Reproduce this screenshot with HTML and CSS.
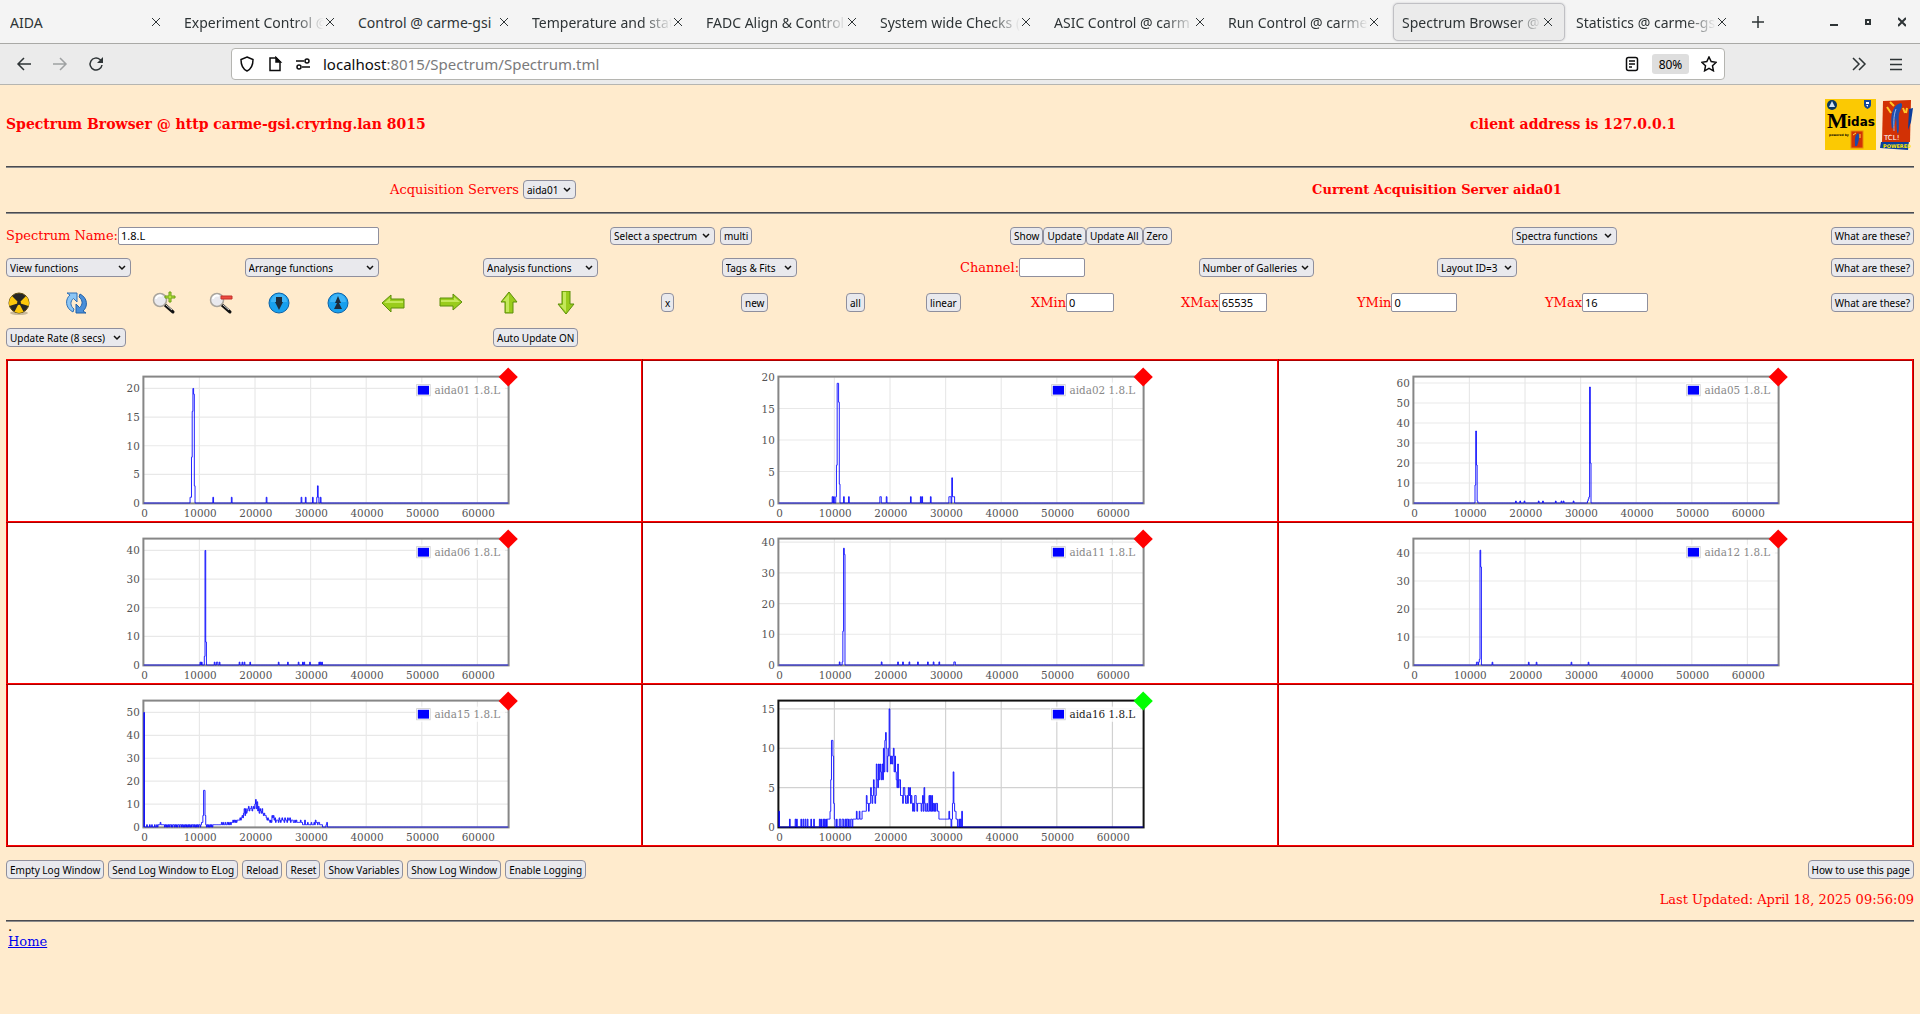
FILE: index.html
```html
<!DOCTYPE html>
<html lang="en">
<head>
    <meta charset="UTF-8">
    <meta name="viewport" content="width=device-width, initial-scale=1.0">
    <title>Spectrum Browser @ carme-gsi</title>
    <link rel="stylesheet" href="styles.css">
</head>
<body>
    <header class="browser">
        <div class="tab-bar">
            <div class="tab"><span class="tab-title">AIDA</span><button class="tab-close" aria-label="Close tab"><svg viewBox="0 0 10 10"><path d="M1 1l8 8M9 1l-8 8"/></svg></button></div>
            <div class="tab"><span class="tab-title fade">Experiment Control @</span><button class="tab-close" aria-label="Close tab"><svg viewBox="0 0 10 10"><path d="M1 1l8 8M9 1l-8 8"/></svg></button></div>
            <div class="tab"><span class="tab-title">Control @ carme-gsi</span><button class="tab-close" aria-label="Close tab"><svg viewBox="0 0 10 10"><path d="M1 1l8 8M9 1l-8 8"/></svg></button></div>
            <div class="tab"><span class="tab-title fade">Temperature and stat</span><button class="tab-close" aria-label="Close tab"><svg viewBox="0 0 10 10"><path d="M1 1l8 8M9 1l-8 8"/></svg></button></div>
            <div class="tab"><span class="tab-title fade">FADC Align &amp; Control</span><button class="tab-close" aria-label="Close tab"><svg viewBox="0 0 10 10"><path d="M1 1l8 8M9 1l-8 8"/></svg></button></div>
            <div class="tab"><span class="tab-title fade">System wide Checks (</span><button class="tab-close" aria-label="Close tab"><svg viewBox="0 0 10 10"><path d="M1 1l8 8M9 1l-8 8"/></svg></button></div>
            <div class="tab"><span class="tab-title fade">ASIC Control @ carm</span><button class="tab-close" aria-label="Close tab"><svg viewBox="0 0 10 10"><path d="M1 1l8 8M9 1l-8 8"/></svg></button></div>
            <div class="tab"><span class="tab-title fade">Run Control @ carme</span><button class="tab-close" aria-label="Close tab"><svg viewBox="0 0 10 10"><path d="M1 1l8 8M9 1l-8 8"/></svg></button></div>
            <div class="tab active"><span class="tab-title fade">Spectrum Browser @</span><button class="tab-close" aria-label="Close tab"><svg viewBox="0 0 10 10"><path d="M1 1l8 8M9 1l-8 8"/></svg></button></div>
            <div class="tab"><span class="tab-title fade">Statistics @ carme-gs</span><button class="tab-close" aria-label="Close tab"><svg viewBox="0 0 10 10"><path d="M1 1l8 8M9 1l-8 8"/></svg></button></div>
            <button class="new-tab" aria-label="New tab"><svg width="12" height="12" viewBox="0 0 12 12"><path d="M6 0v12M0 6h12" stroke-width="1.500"/></svg></button>
            <div class="window-buttons">
                <button aria-label="Minimize"><svg width="8" height="10" viewBox="0 0 8 10"><path d="M0 8h8" stroke-width="2"/></svg></button>
                <button aria-label="Maximize"><svg width="8" height="10" viewBox="0 0 8 10"><path d="M2 3h4v4H2z" stroke-width="2"/></svg></button>
                <button aria-label="Close window"><svg width="8" height="10" viewBox="0 0 8 10"><path d="M0 1l8 8M8 1l-8 8" stroke-width="2"/></svg></button>
            </div>
        </div>
        <div class="nav-bar">
            <div class="nav-buttons">
                <button aria-label="Back"><svg width="16" height="16" viewBox="0 0 16 16"><path d="M15 8H2M8 2L2 8l6 6"/></svg></button>
                <button aria-label="Forward" class="disabled"><svg width="16" height="16" viewBox="0 0 16 16"><path d="M1 8h13M8 2l6 6-6 6"/></svg></button>
                <button aria-label="Reload"><svg width="16" height="16" viewBox="0 0 16 16"><path d="M14 9A6 6 0 1 1 12 3.500L14 5.500"/><path d="M15 1v6H9z" fill="#2e3436" stroke="none"/></svg></button>
            </div>
            <div class="url-bar">
                <svg width="16" height="16" viewBox="0 0 16 16"><path d="M8 1L14 3.500C14 9 12.500 13 8 15C3.500 13 2 9 2 3.500z"/></svg>
                <svg width="16" height="16" viewBox="0 0 16 16"><path d="M3 2h6l4 4v8.500H3z"/><path d="M9 1.500V6h4.500z" fill="#0c0c0d"/></svg>
                <svg width="16" height="16" viewBox="0 0 16 16"><path d="M1 5h8M7 11h8"/><circle cx="12" cy="5" r="2"/><circle cx="4" cy="11" r="2"/></svg>
                <span class="url"><b>localhost</b>:8015/Spectrum/Spectrum.tml</span>
                <svg width="16" height="16" viewBox="0 0 16 16"><rect x="2.500" y="1.500" width="11" height="13" rx="2"/><path d="M5 5h6M5 8h6M5 11h3"/></svg>
                <button class="zoom-level">80%</button>
                <svg width="16" height="16" viewBox="0 0 16 16"><path d="M8 1l2.200 4.600 5 .7-3.700 3.500.9 5L8 12.400l-4.400 2.400.9-5L.8 6.300l5-.7z"/></svg>
            </div>
            <div class="nav-menu">
                <button aria-label="More tools"><svg width="16" height="16" viewBox="0 0 16 16"><path d="M2 2l6 6-6 6M8 2l6 6-6 6"/></svg></button>
                <button aria-label="Menu"><svg width="16" height="16" viewBox="0 0 16 16"><path d="M2 3.500h12M2 8.500h12M2 13.500h12"/></svg></button>
            </div>
        </div>
    </header>

    <main class="page">
        <div class="title-row">
            <h3>Spectrum Browser @ http carme-gsi.cryring.lan 8015</h3>
            <h3>client address is 127.0.0.1</h3>
            <div class="logos">
                <svg width="51" height="51" viewBox="0 0 51 51" role="img" aria-label="Midas">
                    <rect width="51" height="51" fill="#fbc903"/>
                    <circle cx="7" cy="6" r="5" fill="#073763"/>
                    <path d="M4 8h6L7 2z" fill="#cfe2f3"/>
                    <path d="M39 1h7v5c0 2-2 3-3.500 4C41 9 39 8 39 6z" fill="#10479a"/>
                    <path d="M41 3h3v2h-3zM41 6h2v2z" fill="#fff"/>
                    <text x="2" y="29" class="logo-m">M</text>
                    <text x="22" y="27" class="logo-idas">idas</text>
                    <text x="4" y="37" class="logo-small">powered by</text>
                    <rect x="26" y="32" width="12" height="17" fill="#d23105" stroke="#e88a0a"/>
                    <path d="M30 47c0-6-1-10 3-13 2 2 1 8-1 13z" fill="#1c49a8"/>
                    <path d="M28 36l3-2M35 35v4" stroke="#ffd93b" fill="none"/>
                </svg>
                <svg width="33" height="51" viewBox="0 0 33 51" role="img" aria-label="Tcl powered">
                    <path d="M1 43l28-1-1 9-28-2z" fill="#0b3d9c"/>
                    <path d="M3 2l28-1-1 42H2z" fill="#d23105"/>
                    <path d="M29 10l4-1-2 14-3 8z" fill="#0b3d9c"/>
                    <path d="M12 30c-2-12 0-24 9-26 3 2-1 7-2 11s1 14-1 20c-2-3-1-12-2-16-1 4-1 8-4 11z" fill="#1f4fae"/>
                    <path d="M16 10c-3 8-2 15-2 22" fill="none" stroke="#9ab6ea"/>
                    <path d="M7 8l4 6M10 3l4 4M23 9l2 5M27 9l-1 5" stroke="#ffc629" stroke-width="2" fill="none"/>
                    <text x="4" y="41" class="logo-tcl">TCL!</text>
                    <text x="3" y="49" class="logo-powered">POWERED</text>
                </svg>
            </div>
        </div>
        <hr>
        <div class="server-row">
            <div>
                <label for="server">Acquisition Servers</label>
                <select id="server" class="w-server"><option>aida01</option></select>
            </div>
            <b>Current Acquisition Server aida01</b>
        </div>
        <hr>

        <div class="controls name-row">
            <div class="field">
                <label for="spectrum-name">Spectrum Name:</label><input id="spectrum-name" class="w-name" type="text" value="1.8.L">
            </div>
            <div class="spaced">
                <select class="w-spectrum" aria-label="Spectrum"><option>Select a spectrum</option></select>
                <button>multi</button>
            </div>
            <div class="field">
                <button>Show</button><button>Update</button><button>Update All</button><button>Zero</button>
            </div>
            <div><select class="w-spectrum" aria-label="Spectra functions"><option>Spectra functions</option></select></div>
            <div class="help"><button>What are these?</button></div>
        </div>

        <div class="controls function-row">
            <div><select class="w-view" aria-label="View"><option>View functions</option></select></div>
            <div><select class="w-arrange" aria-label="Arrange"><option>Arrange functions</option></select></div>
            <div><select class="w-analysis" aria-label="Analysis"><option>Analysis functions</option></select></div>
            <div><select class="w-tags" aria-label="Tags"><option>Tags &amp; Fits</option></select></div>
            <div class="field"><label for="channel">Channel:</label><input id="channel" class="w-limit" type="text"></div>
            <div><select class="w-analysis" aria-label="Galleries"><option>Number of Galleries</option></select></div>
            <div><select class="w-layout" aria-label="Layout"><option>Layout ID=3</option></select></div>
            <div class="help"><button>What are these?</button></div>
        </div>

        <div class="controls icon-row">
            <button class="icon" aria-label="Zero spectrum"><svg viewBox="0 0 24 24"><ellipse cx="13" cy="22" rx="9" ry="2" fill="#c9b899"/><circle cx="13" cy="12" r="10" fill="#262626" stroke="#5b4a10"/><path d="M13 12L3.500 9A10 10 0 0 0 6 19zM13 12l9.500-3A10 10 0 0 1 20 19zM13 12L8.500 3.200a10 10 0 0 1 9 0z" fill="#fdc70c" transform="rotate(180 13 12)"/><circle cx="13" cy="12" r="2" fill="#262626"/></svg></button>
            <button class="icon" aria-label="Refresh"><svg viewBox="0 0 24 24"><path d="M9 21C1 17 1 8 6 4L3 2h10v9L9.500 7.500C6 10 6 15 10 18z" fill="#8cc6f5" stroke="#2f6fb5"/><path d="M16 3c8 4 8 13 3 17l3 2H12v-9l3.500 3.500C19 14 19 9 15 6z" fill="#4a8fd9" stroke="#2160a8"/></svg></button>
            <button class="icon" aria-label="Zoom in"><svg viewBox="0 0 24 24"><path d="M13 14l8 7" stroke="#111" stroke-width="3" stroke-linecap="round"/><path d="M14 14l6 5" stroke="#ddd"/><circle cx="8" cy="9" r="6.500" fill="#e9e9ee" stroke="#a9a49c" stroke-width="1.500"/><path d="M4 8a4 4 0 0 1 6-3" stroke="#fff" fill="none" stroke-width="2"/><path d="M17 1h2v4h4v2h-4v4h-2V7h-4V5h4z" fill="#b5e63c" stroke="#6b9c12"/></svg></button>
            <button class="icon" aria-label="Zoom out"><svg viewBox="0 0 24 24"><path d="M13 14l8 7" stroke="#111" stroke-width="3" stroke-linecap="round"/><path d="M14 14l6 5" stroke="#ddd"/><circle cx="8" cy="9" r="6.500" fill="#e9e9ee" stroke="#a9a49c" stroke-width="1.500"/><path d="M4 8a4 4 0 0 1 6-3" stroke="#fff" fill="none" stroke-width="2"/><path d="M12 5h11v3H12z" fill="#ee4b40" stroke="#c4302a"/></svg></button>
            <button class="icon" aria-label="Scale down"><svg viewBox="0 0 24 24"><circle cx="13" cy="12" r="10" fill="#18a0ee" stroke="#0c62a8"/><path d="M5 11a8 8 0 0 1 16 0z" fill="#3fb4f6"/><path d="M10 6h6v5h1l-4 8-4-8h1z" fill="#1c2c3c"/></svg></button>
            <button class="icon" aria-label="Scale up"><svg viewBox="0 0 24 24"><circle cx="13" cy="12" r="10" fill="#18a0ee" stroke="#0c62a8"/><path d="M5 11a8 8 0 0 1 16 0z" fill="#3fb4f6"/><path d="M9 18h8l-3-6h2l-3-7-3 7h2z" fill="#1c2c3c"/></svg></button>
            <button class="icon" aria-label="Left"><svg viewBox="0 0 24 24"><path d="M1 12l9-8v4h13v9H10v4z" fill="#9acc1c" stroke="#5d8f0b"/><path d="M3 12l6-5v3h13v2z" fill="#c4e85a"/></svg></button>
            <button class="icon" aria-label="Right"><svg viewBox="0 0 24 24"><path d="M23 11l-9-8v4H1v8h13v4z" fill="#9acc1c" stroke="#5d8f0b"/><path d="M21 11l-6-5v3H2v2z" fill="#c4e85a"/></svg></button>
            <button class="icon" aria-label="Up"><svg viewBox="0 0 24 24"><path d="M13 1l8 10h-4v11H9V11H5z" fill="#9acc1c" stroke="#5d8f0b"/><path d="M13 3l-6 7h3v11h3z" fill="#c4e85a"/></svg></button>
            <button class="icon" aria-label="Down"><svg viewBox="0 0 24 24"><path d="M13 23l8-10h-4V0H9v13H5z" fill="#9acc1c" stroke="#5d8f0b"/><path d="M13 21l-6-7h3V1h3z" fill="#c4e85a"/></svg></button>
            <div><button>x</button></div>
            <div><button>new</button></div>
            <div><button>all</button></div>
            <div><button>linear</button></div>
            <div class="field"><label for="xmin">XMin</label><input id="xmin" class="w-xlimit" type="text" value="0"></div>
            <div class="field"><label for="xmax">XMax</label><input id="xmax" class="w-xlimit" type="text" value="65535"></div>
            <div class="field"><label for="ymin">YMin</label><input id="ymin" class="w-limit" type="text" value="0"></div>
            <div class="field"><label for="ymax">YMax</label><input id="ymax" class="w-limit" type="text" value="16"></div>
            <div class="help"><button>What are these?</button></div>
        </div>

        <div class="controls update-row">
            <div><select class="w-rate" aria-label="Update rate"><option>Update Rate (8 secs)</option></select></div>
            <div><button>Auto Update ON</button></div>
        </div>

        <table class="gallery">
            <tbody id="gallery"></tbody>
        </table>

        <div class="log-row">
            <button>Empty Log Window</button>
            <button>Send Log Window to ELog</button>
            <button>Reload</button>
            <button>Reset</button>
            <button>Show Variables</button>
            <button>Show Log Window</button>
            <button>Enable Logging</button>
            <button class="how-to">How to use this page</button>
        </div>
        <p class="updated">Last Updated: April 18, 2025 09:56:09</p>
        <hr>
        <footer class="footer">
            <span class="dot">.</span>
            <a href="#">Home</a>
        </footer>
    </main>
    <script src="spectra.js"></script>
</body>
</html>
```

FILE: styles.css
```css
* {
    box-sizing: border-box;
}

body {
    margin: 0;
    background: #ffebcd;
    color: #000;
    font-family: "DejaVu Serif", serif;
    font-size: 13px;
}

button, input, select {
    font-family: "Noto Sans", sans-serif;
    font-size: 10px;
    color: #000;
    margin: 0;
}

/* Browser window */

.browser {
    font-family: "Noto Sans", sans-serif;
    font-size: 14px;
    color: #2e3436;
}

.browser svg {
    fill: none;
    stroke: #2e3436;
    flex: none;
    display: block;
}

.browser button {
    display: flex;
    align-items: center;
    justify-content: center;
    border: none;
    background: none;
    padding: 0;
}

.tab-bar {
    display: flex;
    align-items: center;
    height: 44px;
    padding: 3px 14px 2px 0;
    background: #f4f4f4;
    border-bottom: 1px solid #a9a9a6;
}

.tab {
    display: flex;
    align-items: center;
    flex: 0 1 172px;
    height: 38px;
    min-width: 0;
    margin: 0 1px;
    padding: 0 10px 0 8px;
    border: 1px solid transparent;
    border-radius: 5px;
}

.tab.active {
    background: #ebebeb;
    border-color: #c0c0c4;
    box-shadow: 0 0 2px #c0c0c4;
}

.tab-title {
    flex: 1;
    overflow: hidden;
    white-space: nowrap;
}

.tab-title.fade {
    -webkit-mask-image: linear-gradient(to left, transparent, #000 30px);
    mask-image: linear-gradient(to left, transparent, #000 30px);
}

.tab-close {
    width: 12px;
}

.tab-close svg {
    width: 10px;
    height: 10px;
}

.new-tab {
    width: 36px;
}

.window-buttons {
    display: flex;
    gap: 26px;
    margin-left: auto;
}

.nav-bar {
    display: grid;
    grid-template-columns: 215fr 1494fr 179fr;
    align-items: center;
    height: 41px;
    padding: 0 16px;
    background: #ebebeb;
    border-bottom: 1px solid #b5b5b1;
}

.nav-buttons {
    display: flex;
    gap: 20px;
}

.nav-buttons .disabled {
    opacity: 0.4;
}

.nav-buttons svg,
.nav-menu svg,
.url-bar svg {
    stroke-width: 1.5;
}

.nav-menu {
    display: flex;
    justify-content: flex-end;
    gap: 21px;
}

.url-bar {
    display: flex;
    align-items: center;
    gap: 12px;
    height: 32px;
    padding: 0 7px;
    background: #fff;
    border: 1px solid #b5b5b1;
    border-radius: 4px;
}

.url-bar svg {
    stroke: #0c0c0d;
}

.url {
    flex: 1;
    font-size: 15px;
    line-height: 20px;
    color: #7a7a7b;
}

.url b {
    color: #0c0c0d;
    font-weight: normal;
}

.browser .zoom-level {
    width: 37px;
    height: 20px;
    font-size: 12px;
    background: #dedede;
    border-radius: 3px;
}

/* Spectrum page */

.page {
    padding: 13px 6px 0;
    color: #f00;
}

hr {
    margin: 0;
    height: 2px;
    border: none;
    border-top: 1px solid #4a4a4f;
    background: #8c8c8c;
}

.title-row {
    display: grid;
    grid-template-columns: 1464fr 355fr 89px;
    align-items: center;
    height: 68px;
    padding-bottom: 16px;
}

.title-row h3 {
    margin: 0;
    font-size: 14px;
}

.logos {
    display: flex;
    gap: 4px;
}

.logo-m {
    font: bold 22px "Liberation Serif", serif;
}

.logo-idas {
    font: bold 12px "DejaVu Sans", sans-serif;
}

.logo-small {
    font: bold 3px "DejaVu Sans", sans-serif;
}

.logo-tcl {
    font: 7px "DejaVu Sans", sans-serif;
    fill: #fff;
}

.logo-powered {
    font: bold 5px "DejaVu Sans", sans-serif;
    fill: #ffe600;
}

.server-row {
    display: grid;
    grid-template-columns: 1fr 1fr;
    align-items: center;
    justify-items: center;
    height: 44px;
    padding-bottom: 1px;
}

button,
select {
    height: 19px;
    background-color: #e9e9ed;
    border: 1px solid #8f8f9d;
    border-radius: 4px;
}

.page button {
    padding: 0 3px;
}

select {
    appearance: none;
    padding: 0 3px;
    background-image: url("data:image/svg+xml,%3Csvg xmlns='http://www.w3.org/2000/svg' width='8' height='6'%3E%3Cpath d='M1 1l3 3 3-3' fill='none' stroke='%23111' stroke-width='1.500'/%3E%3C/svg%3E");
    background-repeat: no-repeat;
    background-position: right 4px center;
}

input {
    height: 19px;
    padding: 0 2px;
    font-size: 11px;
    background: #fff;
    border: 1px solid #8f8f9d;
    border-radius: 2px;
}

.controls {
    display: grid;
    align-items: center;
}

.controls > * {
    min-width: 0;
    white-space: nowrap;
}

.field {
    display: flex;
    align-items: center;
}

.spaced {
    display: flex;
    gap: 5px;
}

.help {
    justify-self: end;
}

.name-row {
    grid-template-columns: 604fr 400fr 502fr 317fr 85fr;
    height: 44px;
    padding-bottom: 1px;
}

.name-row button,
.name-row select,
.name-row input {
    height: 18px;
}

.function-row {
    grid-template-columns: repeat(8, 1fr);
    height: 19px;
}

.icon-row {
    grid-template-columns: 58fr 88fr 57fr 57fr 59fr 56fr 58fr 57fr 57fr 108fr 80fr 105fr 80fr 105fr 150fr 176fr 188fr 284fr 85fr;
    height: 51px;
}

.page .icon {
    width: 24px;
    height: 24px;
    padding: 0;
    border: none;
    background: none;
}

.icon svg {
    display: block;
    width: 24px;
    height: 24px;
    fill: none;
}

.update-row {
    grid-template-columns: 487fr 1421fr;
    height: 19px;
    margin-bottom: 12px;
}

.w-server { width: 53px; }
.w-name { width: 261px; }
.w-spectrum { width: 105px; }
.w-view { width: 125px; }
.w-arrange { width: 134px; }
.w-analysis { width: 115px; }
.w-tags { width: 75px; }
.w-layout { width: 80px; }
.w-rate { width: 120px; }
.w-limit { width: 66px; }
.w-xlimit { width: 48px; }

/* Gallery of spectra */

.gallery {
    width: 100%;
    table-layout: fixed;
    border-collapse: collapse;
    background: #fff;
}

.gallery td {
    padding: 0;
    height: 162px;
    border: 2px ridge #f00;
    text-align: center;
}

.chart {
    display: block;
    width: 400px;
    height: 160px;
    margin: 0 auto;
}

.chart text {
    font-size: 13px;
    fill: #545454;
}

.chart .grid {
    fill: none;
    stroke: #000;
    stroke-opacity: 0.09;
    stroke-width: 1.5;
}

.chart .frame {
    fill: none;
    stroke: #868686;
    stroke-width: 2.5;
}

.chart .trace {
    fill: none;
    stroke: #00f;
    stroke-opacity: 0.9;
    stroke-width: 1.2;
}

.chart .legend-back {
    fill: #fff;
    fill-opacity: 0.8;
}

.chart .legend-box {
    fill: #fff;
    stroke: #ccc;
}

.chart .legend-color {
    fill: #00f;
}

.chart .legend-text {
    fill: #888;
}

.chart .marker {
    fill: #f00;
}

.chart.selected .grid {
    stroke-opacity: 0.18;
}

.chart.selected .frame {
    stroke: #111;
}

.chart.selected .legend-text {
    fill: #222;
}

.chart.selected .marker {
    fill: #0f0;
}

.log-row {
    display: flex;
    gap: 4px;
    margin-top: 13px;
}

.how-to {
    margin-left: auto;
}

.updated {
    margin: 12px 0;
    line-height: 17px;
    text-align: right;
}

.footer {
    padding: 0 2px;
}

.dot {
    display: block;
    margin-bottom: 3px;
    color: #000;
    line-height: 9px;
}

.footer a {
    color: #00e;
}
```

FILE: spectra.js
```javascript
const BINS = 512;
const LEFT = 23.5, RIGHT = 479, TOP = 20, BOTTOM = 177.5;

// runs: first bin -> one base 36 digit per bin
// peaks: single bins, ones: bins with one count
const spectra = [
    { name: 'aida01 1.8.L', max: 22, step: 5,
      ones: [65, 66, 97, 123, 172, 221, 227, 237, 248],
      peaks: { 67: 8, 68: 16, 69: 20, 70: 19, 71: 3, 244: 3, 245: 1, 243: 1 } },
    { name: 'aida02 1.8.L', max: 20, step: 5,
      ones: [75, 77, 91, 98, 142, 143, 151, 185, 199, 201, 213, 239, 240, 241, 245, 246],
      peaks: { 80: 1, 81: 6, 82: 19, 83: 19, 84: 16, 85: 3, 243: 4, 244: 1 } },
    { name: 'aida05 1.8.L', max: 63, step: 10,
      ones: [89, 143, 149, 155, 175, 181, 199, 207, 210, 224, 244],
      peaks: { 86: 9, 87: 36, 88: 19, 245: 2, 246: 3, 247: 58, 248: 20 } },
    { name: 'aida06 1.8.L', max: 44, step: 10,
      ones: [79, 81, 99, 102, 103, 106, 134, 138, 141, 149, 189, 202, 217, 223, 225, 233, 246, 248, 250],
      peaks: { 85: 3, 86: 40, 87: 8 } },
    { name: 'aida11 1.8.L', max: 41, step: 10,
      ones: [85, 89, 144, 167, 174, 183, 195, 209, 217, 225, 246, 247],
      peaks: { 90: 11, 91: 38, 92: 36 } },
    { name: 'aida12 1.8.L', max: 45, step: 10,
      ones: [88, 89, 91, 110, 161, 172, 221, 245],
      peaks: { 92: 2, 93: 41, 94: 35 } },
    { name: 'aida15 1.8.L', max: 55, step: 10,
      peaks: { 0: 50 },
      runs: {
          1: '0001000100100010010111211111',
          29: '010101011010110101011011010101010101010110101010110',
          80: '1225gg51', 88: '0101010101', 98: '1111111111',
          108: '1212112112121212', 124: '23232323', 132: '333434546',
          141: '8586789', 148: '78897898ac', 158: '8b7968768', 167: '65655',
          172: '43433232', 180: '5453423332', 190: '4323433243324334',
          206: '2333223', 213: '232222232211', 225: '1311121111211121',
          241: '3221221111', 251: '0000012'
      } },
    { name: 'aida16 1.8.L', max: 16, step: 5, selected: true,
      runs: {
          0: '200000000000000100000001010000010010010010000100010000000101001010',
          66: '10111126bb93100', 81: '1000110011001011010011011',
          106: '11121112111222222', 123: '43323354346534', 137: '8658687686',
          147: 'a7bca79a', 155: 'f98989a7976', 166: '58566', 171: '4443554334',
          181: '3545343232', 191: '4432333332', 201: '34253', 206: '223224242',
          215: '4232323', 222: '322', 225: '11111111111111', 239: '211',
          242: '01', 244: '37322', 249: '110010102'
      } }
];

function binCounts(spec) {
    const bins = new Array(BINS).fill(0);
    Object.entries(spec.runs || {}).forEach(([start, run]) => {
        run.split('').forEach((c, i) => bins[Number(start) + i] = parseInt(c, 36));
    });
    (spec.ones || []).forEach(i => bins[i] = 1);
    Object.entries(spec.peaks || {}).forEach(([i, count]) => bins[i] = count);
    return bins;
}

function drawChart(spec) {
    const x = value => LEFT + value / 65535 * (RIGHT - LEFT);
    const y = value => BOTTOM - value / spec.max * (BOTTOM - TOP);
    let grid = '', labels = '';

    for (let v = 0; v <= 60000; v += 10000) {
        if (v > 0) {
            grid += `M${x(v)} ${TOP}V${BOTTOM}`;
        }
        labels += `<text x="${x(v) + 1}" y="195" text-anchor="middle">${v}</text>`;
    }
    for (let v = 0; v <= spec.max; v += spec.step) {
        if (v > 0) {
            grid += `M${LEFT} ${y(v)}H${RIGHT}`;
        }
        labels += `<text x="${LEFT - 5}" y="${y(v) + 5}" text-anchor="end">${v}</text>`;
    }

    let trace = `M${LEFT} ${BOTTOM}`;
    binCounts(spec).forEach((count, i) => {
        trace += `V${y(count)}H${x((i + 1) * 128)}`;
    });

    return `<svg class="chart${spec.selected ? ' selected' : ''}" viewBox="0 0 500 200">
        <path class="grid" d="${grid}"/>
        <rect class="frame" x="${LEFT - 0.5}" y="${TOP - 0.5}" width="${RIGHT - LEFT + 1}" height="${BOTTOM - TOP + 1}"/>
        <path class="trace" d="${trace}"/>
        <rect class="legend-back" x="363" y="27" width="112" height="19"/>
        <rect class="legend-box" x="364.5" y="29.5" width="17" height="14"/>
        <rect class="legend-color" x="366" y="31" width="14" height="11"/>
        <text class="legend-text" x="387" y="41">${spec.name}</text>
        ${labels}
        <path class="marker" d="M479 8l12 12-12 12-12-12z"/>
    </svg>`;
}

let rows = '';
for (let r = 0; r < 3; r++) {
    rows += '<tr>';
    for (let c = 0; c < 3; c++) {
        const spec = spectra[r * 3 + c];
        rows += `<td>${spec ? drawChart(spec) : ''}</td>`;
    }
    rows += '</tr>';
}
document.getElementById('gallery').innerHTML = rows;
```
